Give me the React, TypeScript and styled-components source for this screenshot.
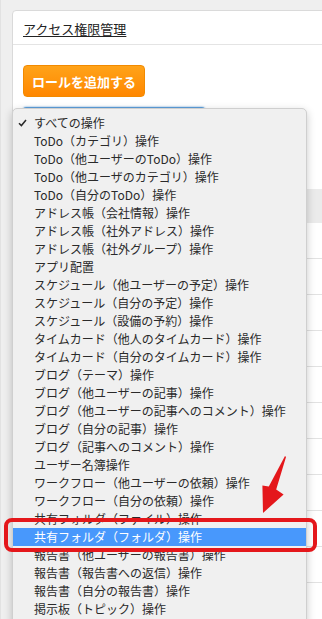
import React from "react"
import styled, { createGlobalStyle } from "styled-components"

const operations: string[] = [
  "すべての操作",
  "ToDo（カテゴリ）操作",
  "ToDo（他ユーザーのToDo）操作",
  "ToDo（他ユーザのカテゴリ）操作",
  "ToDo（自分のToDo）操作",
  "アドレス帳（会社情報）操作",
  "アドレス帳（社外アドレス）操作",
  "アドレス帳（社外グループ）操作",
  "アプリ配置",
  "スケジュール（他ユーザーの予定）操作",
  "スケジュール（自分の予定）操作",
  "スケジュール（設備の予約）操作",
  "タイムカード（他人のタイムカード）操作",
  "タイムカード（自分のタイムカード）操作",
  "ブログ（テーマ）操作",
  "ブログ（他ユーザーの記事）操作",
  "ブログ（他ユーザーの記事へのコメント）操作",
  "ブログ（自分の記事）操作",
  "ブログ（記事へのコメント）操作",
  "ユーザー名簿操作",
  "ワークフロー（他ユーザーの依頼）操作",
  "ワークフロー（自分の依頼）操作",
  "共有フォルダ（ファイル）操作",
  "共有フォルダ（フォルダ）操作",
  "報告書（他ユーザーの報告書）操作",
  "報告書（報告書への返信）操作",
  "報告書（自分の報告書）操作",
  "掲示板（トピック）操作",
]

const CHECKED = 0
const HOVERED = 23

function App() {
  const rows = [0, 1, 2, 3, 4, 5, 6, 7, 8, 9]

  return (
    <Page>
      <GlobalStyle />
      <Card>
        <CardHeader>
          <Title>アクセス権限管理</Title>
        </CardHeader>
        <CardBody>
          <AddButton>ロールを追加する</AddButton>
          <SelectWrap>
            <FakeSelect />
            <Menu>
              {operations.map((op, i) => (
                <MenuItem key={op} $active={i === HOVERED}>
                  <CheckCol>
                    {i === CHECKED && (
                      <svg width="9" height="8" viewBox="0 0 9 8">
                        <path
                          d="M1 4.2 L3.4 6.6 L8 1"
                          fill="none"
                          stroke="#2a2a2a"
                          strokeWidth="1.5"
                        />
                      </svg>
                    )}
                  </CheckCol>
                  {op}
                </MenuItem>
              ))}
            </Menu>
          </SelectWrap>
          <Table>
            <TableHead />
            {rows.map((r) => (
              <TableRow key={r} />
            ))}
          </Table>
        </CardBody>
      </Card>
      <Highlight />
      <Arrow width="34" height="60" viewBox="0 0 34 60">
        <polygon
          points="30,1 31,2 21.2,34.6 28.6,39.4 8,58 7.4,30.6 13.8,31.4"
          fill="#e4171b"
        />
      </Arrow>
    </Page>
  )
}

const GlobalStyle = createGlobalStyle`
  html, body {
    margin: 0;
    padding: 0;
    background: #efefef;
    overflow: hidden;
  }
  body {
    font-family: "Noto Sans CJK JP", "Noto Sans", sans-serif;
    color: #222;
  }
`

const Page = styled.div`
  position: relative;
  height: 619px;
  padding: 10px 0 0 11px;
  box-sizing: border-box;
  overflow: hidden;
  border-left: 1px solid #e2e2e2;
`

const Card = styled.div`
  width: 330px;
  height: 640px;
  background: #fff;
  border: 1px solid #dadada;
  border-radius: 4px;
  box-sizing: border-box;
`

const CardHeader = styled.div`
  height: 34px;
  padding: 0 10px;
  display: flex;
  align-items: center;
  border-bottom: 1px solid #e4e4e4;
  box-sizing: border-box;
`

const Title = styled.span`
  font-size: 13px;
  color: #222;
  text-decoration: underline;
  text-underline-offset: 2px;
  padding-top: 1px;
`

const CardBody = styled.div`
  padding: 20px 0 0 10px;
  display: flex;
  flex-direction: column;
  align-items: flex-start;
`

const AddButton = styled.button`
  width: 122px;
  height: 32px;
  padding: 0;
  border: 1px solid #f28a00;
  border-radius: 4px;
  background: linear-gradient(#ffa319, #ff8700);
  color: #fff;
  font-family: "Noto Sans CJK JP", sans-serif;
  font-size: 13px;
  font-weight: 700;
`

const SelectWrap = styled.div`
  position: relative;
  margin-top: 10px;
`

const FakeSelect = styled.div`
  width: 182px;
  height: 26px;
  border: 1px solid #5b9dd9;
  border-radius: 3px;
  box-shadow: 0 0 2px #5b9dd9;
  background: #fff;
  box-sizing: border-box;
`

const Menu = styled.div`
  position: absolute;
  top: 1px;
  left: -11px;
  width: 295px;
  height: 560px;
  padding-top: 5px;
  background: #f0f0f0;
  border: 1px solid #cfcfcf;
  border-radius: 5px;
  box-shadow: 0 3px 9px rgba(0, 0, 0, 0.22);
  box-sizing: border-box;
  z-index: 2;
`

const MenuItem = styled.div<{ $active: boolean }>`
  display: flex;
  align-items: center;
  height: 18px;
  font-size: 12px;
  line-height: 18px;
  white-space: nowrap;
  color: ${(p) => (p.$active ? "#fff" : "#2a2a2a")};
  background: ${(p) => (p.$active ? "#4898fc" : "transparent")};
`

const CheckCol = styled.span`
  width: 21px;
  padding-left: 5px;
  box-sizing: border-box;
  display: flex;
  align-items: center;
`

const Table = styled.div`
  width: 310px;
  margin-top: 56px;
  display: flex;
  flex-direction: column;
`

const TableHead = styled.div`
  height: 34px;
  background: #ebebeb;
`

const TableRow = styled.div`
  height: 35px;
  border-bottom: 1px solid #e2e2e2;
`

const Highlight = styled.div`
  position: absolute;
  left: 3px;
  top: 518px;
  width: 313px;
  height: 34px;
  border: 4px solid #e4171b;
  border-radius: 8px;
  box-sizing: border-box;
  z-index: 3;
`

const Arrow = styled.svg`
  position: absolute;
  left: 254px;
  top: 455px;
  z-index: 3;
`

export default App
